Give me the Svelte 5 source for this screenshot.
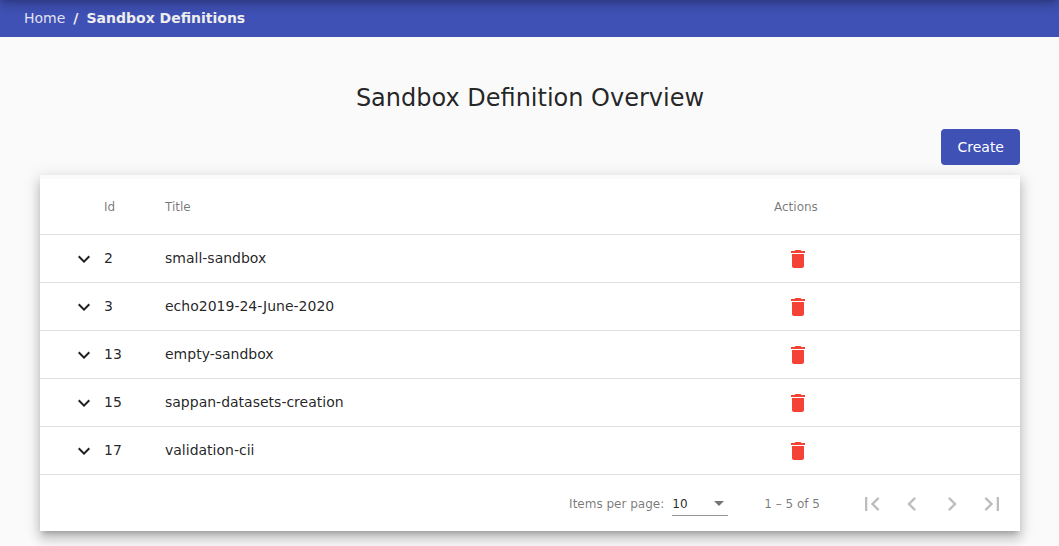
<script>
  const rows = [
    { id: 2, title: 'small-sandbox' },
    { id: 3, title: 'echo2019-24-June-2020' },
    { id: 13, title: 'empty-sandbox' },
    { id: 15, title: 'sappan-datasets-creation' },
    { id: 17, title: 'validation-cii' }
  ];

  const pagerButtons = [
    { label: 'First page', path: 'M18.41 16.59L13.82 12l4.59-4.59L17 6l-6 6 6 6zM6 6h2v12H6z' },
    { label: 'Previous page', path: 'M15.41 7.41L14 6l-6 6 6 6 1.41-1.41L10.83 12z' },
    { label: 'Next page', path: 'M10 6L8.59 7.41 13.17 12l-4.58 4.59L10 18l6-6z' },
    { label: 'Last page', path: 'M5.59 7.41L10.18 12l-4.59 4.59L7 18l6-6-6-6zM16 6h2v12h-2z' }
  ];

  let pageSize = $state('10');
</script>

<nav class="breadcrumb" aria-label="Breadcrumb">
  <a href="#home">Home</a>
  <span class="separator">/</span>
  <span class="current" aria-current="page">Sandbox Definitions</span>
</nav>

<main>
  <h1>Sandbox Definition Overview</h1>
  <div class="toolbar">
    <button class="create" type="button">Create</button>
  </div>

  <section class="card">
    <table>
      <colgroup>
        <col class="col-expand" />
        <col class="col-id" />
        <col />
        <col class="col-actions" />
      </colgroup>
      <thead>
        <tr>
          <th></th>
          <th scope="col">Id</th>
          <th scope="col">Title</th>
          <th scope="col">Actions</th>
        </tr>
      </thead>
      <tbody>
        {#each rows as row (row.id)}
          <tr>
            <td class="expand">
              <button class="icon-button" type="button" aria-label="Expand {row.title}">
                <svg viewBox="0 0 24 24" width="24" height="24"><path d="M7.41 8.59L12 13.17l4.59-4.58L18 10l-6 6-6-6z" /></svg>
              </button>
            </td>
            <td class="text">{row.id}</td>
            <td class="text">{row.title}</td>
            <td class="actions">
              <button class="icon-button delete" type="button" aria-label="Delete {row.title}">
                <svg viewBox="0 0 24 24" width="24" height="24"><path d="M6 19c0 1.1.9 2 2 2h8c1.1 0 2-.9 2-2V7H6v12zM19 4h-3.500l-1-1h-5l-1 1H5v2h14V4z" /></svg>
              </button>
            </td>
          </tr>
        {/each}
      </tbody>
    </table>

    <div class="paginator">
      <label for="page-size">Items per page:</label>
      <div class="select">
        <select id="page-size" bind:value={pageSize}>
          <option>5</option>
          <option>10</option>
          <option>25</option>
        </select>
        <svg class="arrow" viewBox="0 0 10 5" width="10" height="5"><path d="M0 0h10L5 5z" /></svg>
      </div>
      <span class="range">1 – 5 of 5</span>
      <div class="pager">
        {#each pagerButtons as button (button.label)}
          <button type="button" disabled aria-label={button.label}>
            <svg viewBox="0 0 24 24" width="28" height="28"><path d={button.path} /></svg>
          </button>
        {/each}
      </div>
    </div>
  </section>
</main>

<style>
  :global(body) {
    margin: 0;
    background: #fafafa;
    color: rgba(0, 0, 0, 0.87);
    font-family: "DejaVu Sans", sans-serif;
    font-size: 14px;
  }

  button {
    border: 0;
    padding: 0;
    background: none;
    color: inherit;
    font: inherit;
    cursor: pointer;
  }

  svg {
    display: block;
    fill: currentColor;
  }

  .breadcrumb {
    position: relative;
    display: flex;
    align-items: center;
    gap: 8px;
    height: 37px;
    padding: 0 24px 2px;
    box-sizing: border-box;
    overflow: hidden;
    background: #3f51b5;
    color: #eeeeee;
  }

  /* Shadow cast by the bar above the breadcrumb. */
  .breadcrumb::before {
    content: "";
    position: absolute;
    inset: -64px 0 auto;
    height: 64px;
    box-shadow:
      0 3px 5px -3px rgba(0, 0, 0, 0.2),
      0 6px 10px 0 rgba(0, 0, 0, 0.14),
      0 1px 14px 0 rgba(0, 0, 0, 0.12);
  }

  .breadcrumb a {
    color: #e0e2f2;
    text-decoration: none;
  }

  .separator,
  .current {
    font-weight: 700;
  }

  main {
    padding: 45px 39px 15px 40px;
  }

  h1 {
    margin: 0 0 15px;
    font-size: 24px;
    font-weight: 400;
    line-height: 32px;
    text-align: center;
  }

  .toolbar {
    display: flex;
    justify-content: flex-end;
    margin-bottom: 10px;
  }

  .create {
    padding: 0 16px;
    border-radius: 4px;
    background: #3f51b5;
    color: #fff;
    line-height: 36px;
  }

  .card {
    padding-top: 4px;
    background: #fafafa;
    box-shadow:
      0 5px 5px -3px rgba(0, 0, 0, 0.2),
      0 8px 10px 1px rgba(0, 0, 0, 0.14),
      0 3px 14px 2px rgba(0, 0, 0, 0.12);
  }

  table {
    width: 100%;
    table-layout: fixed;
    border-collapse: separate;
    border-spacing: 0;
    background: #fff;
  }

  .col-expand {
    width: 64px;
  }

  .col-id {
    width: 61px;
  }

  .col-actions {
    width: 246px;
  }

  th,
  td {
    box-sizing: border-box;
    height: 48px;
    padding: 0;
    border-bottom: 1px solid #e0e0e0;
    text-align: left;
    vertical-align: middle;
  }

  th {
    height: 56px;
    color: rgba(0, 0, 0, 0.54);
    font-size: 12px;
    font-weight: 400;
  }

  .text {
    padding-bottom: 2px;
  }

  .expand {
    padding-left: 32px;
  }

  .actions {
    padding-left: 12px;
  }

  .icon-button {
    display: block;
  }

  .delete {
    color: #f44336;
  }

  .paginator {
    display: flex;
    align-items: center;
    justify-content: flex-end;
    box-sizing: border-box;
    height: 56px;
    padding: 2px 8px 0 0;
    background: #fff;
    color: rgba(0, 0, 0, 0.54);
    font-size: 12px;
  }

  .select {
    position: relative;
    width: 56px;
    margin: 0 36px 0 8px;
  }

  select {
    display: block;
    width: 100%;
    height: 24px;
    padding: 0;
    border: 0;
    border-bottom: 1px solid #949494;
    border-radius: 0;
    appearance: none;
    background: transparent;
    color: rgba(0, 0, 0, 0.87);
    font: inherit;
  }

  .arrow {
    position: absolute;
    top: 9px;
    right: 4px;
    color: #757575;
    pointer-events: none;
  }

  .pager {
    display: flex;
    margin-left: 32px;
  }

  .pager button {
    display: grid;
    place-items: center;
    width: 40px;
    height: 40px;
    color: rgba(0, 0, 0, 0.26);
    cursor: default;
  }
</style>
